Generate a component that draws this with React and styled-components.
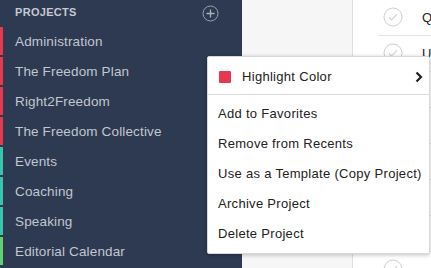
import styled, { createGlobalStyle } from "styled-components";

const GlobalStyle = createGlobalStyle`
    html, body {
        margin: 0;
        padding: 0;
        width: 431px;
        height: 268px;
        overflow: hidden;
        font-family: "Liberation Sans", Arial, sans-serif;
    }
`;

const projects = [
    { name: "Administration", color: "#e8384f" },
    { name: "The Freedom Plan", color: "#e8384f" },
    { name: "Right2Freedom", color: "#e8384f" },
    { name: "The Freedom Collective", color: "#e8384f" },
    { name: "Events", color: "#37c5ab" },
    { name: "Coaching", color: "#37c5ab" },
    { name: "Speaking", color: "#37c5ab" },
    { name: "Editorial Calendar", color: "#62d26f" },
];

const menuItems = [
    "Add to Favorites",
    "Remove from Recents",
    "Use as a Template (Copy Project)",
    "Archive Project",
    "Delete Project",
];

// first letters of the tasks peek out on the right
const tasks = ["Q", "U", "", "", "", "", "", ""];

const PlusIcon = () => (
    <svg width="17" height="17" viewBox="0 0 17 17" fill="none">
        <circle cx="8.5" cy="8.5" r="7.5" stroke="#9aa2b1" strokeWidth="1" />
        <path d="M8.5 4.5v8M4.5 8.5h8" stroke="#aab1be" strokeWidth="1.3" />
    </svg>
);

const CheckCircle = () => (
    <svg width="20" height="20" viewBox="0 0 20 20" fill="none">
        <circle cx="10" cy="10" r="9" stroke="#cfcfcf" strokeWidth="1" />
        <path d="M6 10.3l2.6 2.6L14 7.2" stroke="#d4d4d4" strokeWidth="1.2" />
    </svg>
);

const Chevron = () => (
    <svg width="8" height="12" viewBox="0 0 8 12" fill="none">
        <path d="M1.5 1.5L6 6l-4.5 4.5" stroke="#222" strokeWidth="2.2" />
    </svg>
);

const App = () => {
    return (
        <>
            <GlobalStyle />
            <Page>
                <Sidebar>
                    <SectionHeader>
                        <span>Projects</span>
                        <PlusIcon />
                    </SectionHeader>
                    {projects.map((project, index) => (
                        <ProjectRow key={index} $color={project.color}>
                            {project.name}
                        </ProjectRow>
                    ))}
                </Sidebar>
                <MidPanel />
                <TaskList>
                    {tasks.map((letter, index) => (
                        <TaskRow key={index}>
                            <CheckCircle />
                            <span>{letter}</span>
                        </TaskRow>
                    ))}
                </TaskList>

                <Menu>
                    <HighlightRow>
                        <Swatch />
                        <span>Highlight Color</span>
                        <ChevronWrap>
                            <Chevron />
                        </ChevronWrap>
                    </HighlightRow>
                    <MenuList>
                        {menuItems.map((item, index) => (
                            <MenuItem key={index}>{item}</MenuItem>
                        ))}
                    </MenuList>
                </Menu>
            </Page>
        </>
    );
};

export default App;

const Page = styled.div`
    position: relative;
    display: flex;
    width: 431px;
    height: 268px;
    overflow: hidden;
`;

const Sidebar = styled.div`
    width: 242px;
    flex-shrink: 0;
    background-color: #2d3a52;
    display: flex;
    flex-direction: column;
`;

const SectionHeader = styled.div`
    height: 26px;
    display: flex;
    align-items: center;
    justify-content: space-between;
    padding: 0 23px 0 15px;
    box-sizing: border-box;

    span {
        text-transform: uppercase;
        font-weight: bold;
        font-size: 11px;
        letter-spacing: 0.3px;
        color: #c4c9d2;
        margin-top: -2px;
    }
`;

const ProjectRow = styled.div`
    height: 30px;
    flex-shrink: 0;
    display: flex;
    align-items: center;
    padding-left: 15px;
    font-size: 13.5px;
    letter-spacing: 0.15px;
    color: #c2c7d0;
    position: relative;

    &::before {
        content: "";
        position: absolute;
        left: 0;
        top: 1px;
        bottom: 1px;
        width: 3px;
        background-color: ${(p) => p.$color};
    }
`;

const MidPanel = styled.div`
    width: 110px;
    flex-shrink: 0;
    background-color: #f6f6f7;
    border-right: 1px solid #dedede;
`;

const TaskList = styled.div`
    flex: 1;
    background-color: #fff;
    padding-left: 25px;
`;

const TaskRow = styled.div`
    height: 36px;
    display: flex;
    align-items: center;
    gap: 19px;
    padding-left: 5px;
    border-bottom: 1px solid #e4e4e4;
    box-sizing: border-box;

    svg {
        flex-shrink: 0;
        margin-top: -1px;
    }

    span {
        font-size: 13px;
        color: #222;
    }
`;

const Menu = styled.div`
    position: absolute;
    left: 207px;
    top: 56px;
    width: 223px;
    background-color: #fff;
    border: 1px solid #d8d8d8;
    border-radius: 2px;
    box-shadow: 0 1px 4px rgba(0, 0, 0, 0.25);
    box-sizing: border-box;
`;

const HighlightRow = styled.div`
    height: 38px;
    display: flex;
    align-items: center;
    padding: 2px 6px 0 11px;
    box-sizing: border-box;
    border-bottom: 1px solid #d9d9d9;
    font-size: 13px;
    letter-spacing: 0.3px;
    color: #222;

    span {
        margin-left: 11px;
    }
`;

const Swatch = styled.div`
    width: 12px;
    height: 12px;
    border-radius: 1px;
    background-color: #e8384f;
`;

const ChevronWrap = styled.div`
    margin-left: auto;
    display: flex;
`;

const MenuList = styled.div`
    padding: 3px 0 5px;
`;

const MenuItem = styled.div`
    height: 30px;
    display: flex;
    align-items: center;
    padding-left: 10px;
    font-size: 13px;
    letter-spacing: 0.3px;
    color: #222;
`;
